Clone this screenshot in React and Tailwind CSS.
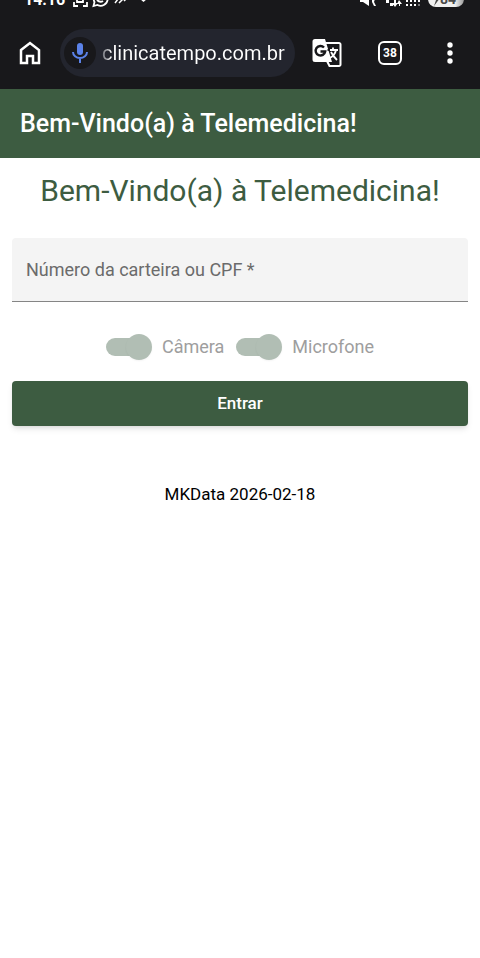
import React from "react";

const TITLE = "Bem-Vindo(a) à Telemedicina!";

const toggles = [
  { id: "camera", label: "Câmera" },
  { id: "microfone", label: "Microfone" },
];

// Android status bar, scrolled partly out of view
const StatusBar = () => (
  <div className="flex h-2 items-end justify-between overflow-hidden pr-4 pl-6 text-white">
    <div className="flex items-end gap-2">
      <span className="text-base leading-4 font-bold">14:16</span>
      <svg width="84" height="16" viewBox="0 0 84 16" fill="none" stroke="currentColor" strokeWidth="2">
        <path d="M1 10v4h4M10 14h4v-4M4 7v3h6V7" strokeWidth="1.8" />
        <path d="M20.500 14l1-4a7 7 0 1 1 3 3z" strokeWidth="1.8" />
        <path d="M24 8q3 3 6 1" />
        <path d="M42 11l3-4M46 11l4-4M51 9l3-3" strokeWidth="1.5" />
        <path d="M67 7h7l-3.500 3z" fill="currentColor" stroke="none" />
      </svg>
    </div>
    <div className="flex items-end gap-1">
      <svg width="64" height="16" viewBox="0 0 64 16" fill="currentColor">
        <path d="M0 8h4l5-3v9L3 10H0zM12 7h3l-1 3 2 4h-2l-2-4z" />
        <path d="M26 8h3v3h-3zM30 11h3v3h-3zM34 7h2v4h2l-3 4-3-4h2zM39 12h-2l2-4 3 4h-2v2h-1z" />
        <path d="M46 8h2v2h-2zM50 8h2v2h-2zM54 8h2v2h-2zM58 8h2v2h-2zM46 12h2v2h-2zM50 12h2v2h-2zM54 12h2v2h-2z" />
        <path d="M58 12h2v2h-2z" opacity=".4" />
      </svg>
      <span className="mb-px flex h-4 items-center rounded-full bg-linear-to-r from-[#f0f0f0] from-75% to-[#9a9a9a] pr-2 pl-1 text-sm leading-4 font-bold text-[#4a4a4a]">
        <svg width="8" height="14" viewBox="0 0 8 14" fill="currentColor">
          <path d="M5 0L1 8h3l-2 6 6-8H4z" />
        </svg>
        84
      </span>
    </div>
  </div>
);

const BrowserBar = () => (
  <div className="flex items-center px-4 pt-[21px] pb-3 text-white">
    <button type="button" aria-label="Início" className="flex w-7 justify-center">
      <svg width="22" height="24" viewBox="0 0 22 24" fill="none" stroke="currentColor" strokeWidth="2.5">
        <path d="M2 9L11 2l9 7v13h-6v-7H8v7H2z" />
      </svg>
    </button>

    <div className="ml-4 flex h-12 min-w-0 flex-1 items-center rounded-full bg-[#23252e] pr-2.5 pl-1">
      <button
        type="button"
        aria-label="Pesquisa por voz"
        className="flex size-8 shrink-0 items-center justify-center rounded-full bg-[#18181b]"
      >
        <svg width="16" height="22" viewBox="0 0 16 22" fill="none" stroke="#5b82e8" strokeWidth="2">
          <rect x="5" y="1" width="6" height="12" rx="3" fill="#5b82e8" stroke="none" />
          <path d="M1 10a7 6 0 0 0 14 0M8 16v5" />
        </svg>
      </button>
      <span className="ml-1.5 overflow-hidden bg-linear-to-r from-[#6b6d74] to-white to-5% bg-clip-text text-xl whitespace-nowrap text-transparent">
        clinicatempo.com.br/
      </span>
    </div>

    <button type="button" aria-label="Traduzir" className="ml-4 shrink-0">
      <svg width="32" height="30" viewBox="0 0 32 30">
        <path d="M15 5h13a1.500 1.500 0 0 1 1.500 1.500v20a1.500 1.500 0 0 1-1.500 1.500H18.500L16 23" fill="none" stroke="#fff" strokeWidth="2" />
        <path d="M4 1H14l7 23H4A2.500 2.500 0 0 1 1.500 21.500v-18A2.500 2.500 0 0 1 4 1z" fill="#fff" />
        <path d="M13 9.500a4.800 4.800 0 1 0 1.200 4H9.500" fill="none" stroke="#18181b" strokeWidth="2.400" />
        <path d="M16.500 12H20" stroke="#18181b" strokeWidth="1.800" />
        <path d="M19 12h8M22 9.500V12M25 12q-1 5-6 8M20 14q2 4 6 8" fill="none" stroke="#fff" strokeWidth="1.800" />
      </svg>
    </button>
    <button
      type="button"
      aria-label="Abas abertas"
      className="ml-[35px] flex h-6 w-6 shrink-0 items-center justify-center rounded-md border-2 border-white text-xs font-bold"
    >
      38
    </button>
    <button type="button" aria-label="Mais opções" className="mr-1.5 ml-10 flex w-4 shrink-0 justify-center">
      <svg width="6" height="22" viewBox="0 0 6 22" fill="currentColor">
        <circle cx="3" cy="3" r="2.700" />
        <circle cx="3" cy="11" r="2.700" />
        <circle cx="3" cy="19" r="2.700" />
      </svg>
    </button>
  </div>
);

const Toggle = ({ id, label }) => (
  <label htmlFor={id} className="flex items-center gap-2.5 text-lg text-[#9e9e9e]">
    <span className="relative flex h-7 w-[46px] items-center">
      <input
        id={id}
        type="checkbox"
        role="switch"
        defaultChecked
        disabled
        className="h-[18px] w-10 appearance-none rounded-full bg-[#b1beb4]"
      />
      <span className="pointer-events-none absolute right-0 size-[26px] rounded-full bg-[#b1beb4] shadow-xs" />
    </span>
    {label}
  </label>
);

const App = () => {
  return (
    <div className="min-h-screen bg-white font-[Roboto,sans-serif]">
      <div className="bg-[#18181b]">
        <StatusBar />
        <BrowserBar />
      </div>

      <header className="bg-[#3d5c41] px-5 py-5 text-white">
        <p className="text-[25px] leading-[29px] font-medium">{TITLE}</p>
      </header>

      <main className="px-3 pt-3 text-center">
        <h1 className="text-[30px] leading-[42px] text-[#3d5c41]">{TITLE}</h1>

        <form onSubmit={(e) => e.preventDefault()}>
          <input
            type="text"
            required
            aria-label="Número da carteira ou CPF"
            placeholder="Número da carteira ou CPF *"
            className="mt-[26px] block h-16 w-full rounded-t border-b border-[#858585] bg-[#f4f4f4] px-3.5 text-lg text-gray-900 shadow-none outline-none placeholder:text-[#6b6b6b]"
          />

          <div className="mt-[31px] flex justify-center gap-3">
            {toggles.map((t) => (
              <Toggle key={t.id} id={t.id} label={t.label} />
            ))}
          </div>

          <button
            type="submit"
            className="mt-5 h-[45px] w-full rounded bg-[#3d5c41] text-[17px] font-medium text-white shadow-md"
          >
            Entrar
          </button>
        </form>

        <p className="mt-14 text-[17px] leading-6 text-black">MKData 2026-02-18</p>
      </main>
    </div>
  );
};

export default App;
